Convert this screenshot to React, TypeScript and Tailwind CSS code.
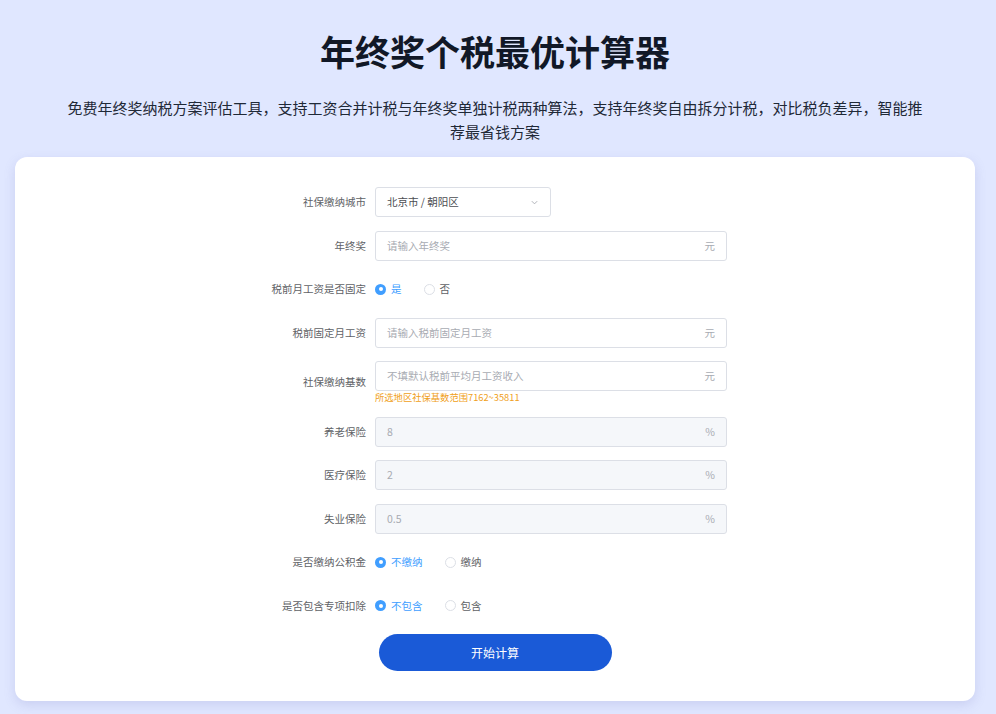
import React, { useState } from 'react';

const font = { fontFamily: '"Noto Sans CJK SC", "Noto Sans", sans-serif' };

type RowProps = { label: string; children: React.ReactNode };

const Row: React.FC<RowProps> = ({ label, children }) => (
  <div className="flex items-center mb-[13.5px]">
    <div className="w-[112px] shrink-0 pr-[9px] text-right text-[10.5px] text-[#606266]">{label}</div>
    <div className="w-[352px]">{children}</div>
  </div>
);

const Field: React.FC<{ placeholder?: string; value?: string; suffix: string; disabled?: boolean }> = ({
  placeholder,
  value,
  suffix,
  disabled,
}) => (
  <div
    className={`flex items-center h-[30px] px-[11px] rounded-[3px] border border-[#dcdfe6] ${
      disabled ? 'bg-[#f5f7fa]' : 'bg-white'
    }`}
  >
    <span className="flex-1 text-[10.5px] text-[#a8abb2]">{value ?? placeholder}</span>
    <span className="text-[10.5px] text-[#a8abb2]">{suffix}</span>
  </div>
);

const Radios: React.FC<{ options: string[] }> = ({ options }) => {
  const [sel, setSel] = useState(0);
  return (
    <div className="flex items-center h-[30px]">
      {options.map((o, i) => (
        <button key={o} onClick={() => setSel(i)} className="flex items-center mr-[22px] cursor-pointer">
          {sel === i ? (
            <span className="w-[11px] h-[11px] rounded-full bg-[#409eff] flex items-center justify-center">
              <span className="w-[4px] h-[4px] rounded-full bg-white" />
            </span>
          ) : (
            <span className="w-[11px] h-[11px] rounded-full border border-[#dcdfe6] bg-white" />
          )}
          <span className={`ml-[5px] text-[10.5px] ${sel === i ? 'text-[#409eff]' : 'text-[#606266]'}`}>{o}</span>
        </button>
      ))}
    </div>
  );
};

export default function App() {
  return (
    <div className="min-h-[714px] bg-[#e0e7ff] pl-[15px] pr-[21px] pb-[13px]" style={font}>
      <div className="pt-[30px] text-center">
        <h1 className="text-[35px] leading-[42px] font-bold text-[#111827]">年终奖个税最优计算器</h1>
        <p className="mx-auto mt-[24px] max-w-[862px] text-[15px] leading-[24px] text-[#1f2937]">
          免费年终奖纳税方案评估工具，支持工资合并计税与年终奖单独计税两种算法，支持年终奖自由拆分计税，对比税负差异，智能推荐最省钱方案
        </p>
      </div>

      <div className="mt-[13px] rounded-[12px] bg-white pt-[30px] pb-[30px] shadow-[0_4px_12px_rgba(99,102,180,0.18)]">
        <div className="mx-auto w-[464px]">
          <Row label="社保缴纳城市">
            <div className="flex items-center w-[176px] h-[30px] px-[11px] rounded-[3px] border border-[#dcdfe6] bg-white">
              <span className="flex-1 text-[10.5px] text-[#4b4d52]">北京市 / 朝阳区</span>
              <svg width="9" height="9" viewBox="0 0 10 10" fill="none" stroke="#a8abb2" strokeWidth="1">
                <path d="M2 3.5 L5 6.5 L8 3.5" />
              </svg>
            </div>
          </Row>
          <Row label="年终奖">
            <Field placeholder="请输入年终奖" suffix="元" />
          </Row>
          <Row label="税前月工资是否固定">
            <Radios options={['是', '否']} />
          </Row>
          <Row label="税前固定月工资">
            <Field placeholder="请输入税前固定月工资" suffix="元" />
          </Row>
          <Row label="社保缴纳基数">
            <div>
              <Field placeholder="不填默认税前平均月工资收入" suffix="元" />
              <div className="h-[12px] leading-[12px] text-[9.3px] text-[#f0a020]">所选地区社保基数范围7162~35811</div>
            </div>
          </Row>
          <Row label="养老保险">
            <Field value="8" suffix="%" disabled />
          </Row>
          <Row label="医疗保险">
            <Field value="2" suffix="%" disabled />
          </Row>
          <Row label="失业保险">
            <Field value="0.5" suffix="%" disabled />
          </Row>
          <Row label="是否缴纳公积金">
            <Radios options={['不缴纳', '缴纳']} />
          </Row>
          <Row label="是否包含专项扣除">
            <Radios options={['不包含', '包含']} />
          </Row>
        </div>
        <div className="flex justify-center">
          <button className="w-[233px] h-[37px] rounded-full bg-[#1a5ad7] text-white text-[12px]">开始计算</button>
        </div>
      </div>
    </div>
  );
}
